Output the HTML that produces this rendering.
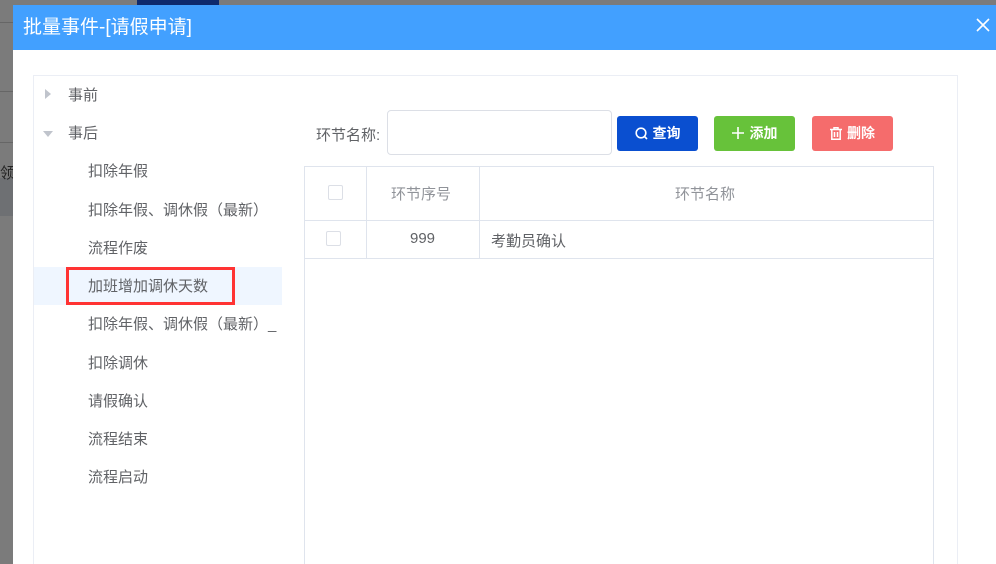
<!DOCTYPE html>
<html><head><meta charset="utf-8"><style>
*{margin:0;padding:0;box-sizing:border-box}
html,body{width:996px;height:564px;overflow:hidden}
body{background:#7b7b7b;position:relative;font-family:"Liberation Sans","Noto Sans CJK SC",sans-serif;font-size:15px;color:#606266}
.abs{position:absolute}
.modal{left:13px;top:5px;width:983px;height:559px;background:#fff}
.hdr{left:13px;top:5px;width:983px;height:45px;background:#42a0ff;color:#fff;font-size:19px;line-height:45px;padding-left:10px}
.panel{left:33px;top:75px;width:925px;height:495px;border:1px solid #ebeef5}
.ti{position:absolute;left:88px;font-size:15px;color:#606266;line-height:20px}
.btn{position:absolute;top:116px;height:35px;width:81px;border-radius:3px;color:#fff;font-size:14px;line-height:35px;text-align:center}
.cb{position:absolute;width:15px;height:15px;border:1px solid #dcdfe6;border-radius:2px;background:#fff}
</style></head><body>
<div class="abs" style="left:0;top:22px;width:13px;height:1px;background:#666"></div>
<div class="abs" style="left:0;top:91px;width:13px;height:1px;background:#666"></div>
<div class="abs" style="left:0;top:142px;width:13px;height:1px;background:#666"></div>
<div class="abs" style="left:0;top:178px;width:13px;height:38px;background:#6e7073"></div>
<div class="abs" style="left:0;top:162px;font-size:15px;color:#222">领</div>
<div class="abs" style="left:137px;top:0;width:82px;height:5px;background:#0e2a6e"></div>
<div class="abs modal"></div>
<div class="abs hdr">批量事件-[请假申请]</div>
<svg class="abs" style="left:976px;top:18px" width="14" height="14" viewBox="0 0 14 14"><path d="M1 1L13 13M13 1L1 13" stroke="#fff" stroke-width="1.6"/></svg>
<div class="abs panel"></div>
<div class="abs" style="left:45px;top:89px;width:0;height:0;border-top:5px solid transparent;border-bottom:5px solid transparent;border-left:6px solid #c0c4cc"></div>
<div class="abs" style="left:43px;top:131px;width:0;height:0;border-left:5px solid transparent;border-right:5px solid transparent;border-top:6px solid #c0c4cc"></div>
<div class="ti" style="left:68px;top:86px">事前</div>
<div class="ti" style="left:68px;top:124px">事后</div>
<div class="ti" style="top:162px">扣除年假</div>
<div class="ti" style="top:201px">扣除年假、调休假（最新）</div>
<div class="ti" style="top:239px">流程作废</div>
<div class="abs" style="left:34px;top:267px;width:248px;height:38px;background:#eff6ff"></div>
<div class="abs" style="left:66px;top:267px;width:169px;height:38px;border:3px solid #f33"></div>
<div class="ti" style="top:277px">加班增加调休天数</div>
<div class="ti" style="top:315px">扣除年假、调休假（最新）_</div>
<div class="ti" style="top:354px">扣除调休</div>
<div class="ti" style="top:392px">请假确认</div>
<div class="ti" style="top:430px">流程结束</div>
<div class="ti" style="top:468px">流程启动</div>
<div class="abs" style="left:316px;top:124px;font-size:15px;color:#606266">环节名称:</div>
<div class="abs" style="left:387px;top:110px;width:225px;height:45px;border:1px solid #dcdfe6;border-radius:4px"></div>
<div class="btn" style="left:617px;background:#0a4fd0;font-weight:bold"><svg width="13" height="13" viewBox="0 0 13 13" style="vertical-align:-2px;margin-right:5px"><circle cx="6" cy="6" r="4.8" fill="none" stroke="#fff" stroke-width="1.6"/><path d="M9.5 9.5L12 12" stroke="#fff" stroke-width="1.6"/></svg>查询</div>
<div class="btn" style="left:714px;background:#67c23a;font-weight:bold"><svg width="12" height="12" viewBox="0 0 12 12" style="vertical-align:-1px;margin-right:6px"><path d="M6 0V12M0 6H12" stroke="#fff" stroke-width="1.6"/></svg>添加</div>
<div class="btn" style="left:812px;background:#f56c6c;font-weight:bold"><svg width="12" height="13" viewBox="0 0 12 13" style="vertical-align:-2px;margin-right:5px"><path d="M0 2.5H12M4 2.5V0.8H8V2.5M1.8 2.5V12.2H10.2V2.5M4.5 5V10M7.5 5V10" fill="none" stroke="#fff" stroke-width="1.5"/></svg>删除</div>
<div class="abs" style="left:304px;top:166px;width:630px;height:410px;border:1px solid #dfe4ed"></div>
<div class="abs" style="left:304px;top:220px;width:630px;height:1px;background:#dfe4ed"></div>
<div class="abs" style="left:304px;top:258px;width:630px;height:1px;background:#dfe4ed"></div>
<div class="abs" style="left:366px;top:166px;width:1px;height:93px;background:#dfe4ed"></div>
<div class="abs" style="left:479px;top:166px;width:1px;height:93px;background:#dfe4ed"></div>
<div class="cb" style="left:328px;top:185px"></div>
<div class="cb" style="left:326px;top:231px"></div>
<div class="abs" style="left:391px;top:183px;color:#909399">环节序号</div>
<div class="abs" style="left:675px;top:183px;color:#909399">环节名称</div>
<div class="abs" style="left:410px;top:230px">999</div>
<div class="abs" style="left:491px;top:230px">考勤员确认</div>
</body></html>
